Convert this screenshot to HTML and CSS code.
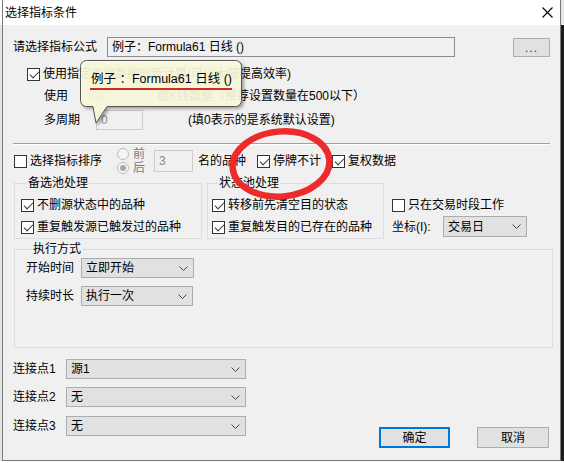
FILE: index.html
```html
<!DOCTYPE html>
<html lang="zh-CN">
  <head>
    <meta charset="UTF-8" />
    <title>选择指标条件</title>
    <link rel="stylesheet" href="styles.css">
  </head>
  <body>
    <div class="screen">
      <div class="left-edge"></div>
      <div class="dialog">
        <div class="titlebar">
          <span class="title">选择指标条件</span>
          <svg class="close" width="11" height="11" viewBox="0 0 11 11">
            <path d="M0.5 0.5 L10.5 10.5 M10.5 0.5 L0.5 10.5" stroke="#000" stroke-width="1.1" fill="none" />
          </svg>
        </div>

        <div class="content">
          <div class="row formula-row">
            <span class="lbl formula-lbl">请选择指标公式</span>
            <div class="field formula">例子：Formula61 日线 ()</div>
            <button class="btn dots">...</button>
          </div>

          <div class="row period-check">
            <span class="cb on"></span>
            <span class="cb-text">使用指定周期数据刷新计算(可以大幅提高效率)</span>
          </div>

          <div class="row count-row">
            <span class="lbl">使用</span>
            <div class="field disabled count">860</div>
            <span class="note">根K线数据（推荐设置数量在500以下）</span>
          </div>

          <div class="row multi-row">
            <span class="lbl">多周期</span>
            <div class="field disabled multi">0</div>
            <span class="note">(填0表示的是系统默认设置)</span>
          </div>

          <div class="separator"></div>

          <div class="row sort-row">
            <span class="cb"></span>
            <span class="cb-text">选择指标排序</span>
            <div class="radios">
              <div class="radio-item"><span class="radio"></span><span>前</span></div>
              <div class="radio-item"><span class="radio on"></span><span>后</span></div>
            </div>
            <div class="field disabled top-n">3</div>
            <span class="rank-text">名的品种</span>
            <span class="cb on suspend-cb"></span>
            <span class="cb-text">停牌不计</span>
            <span class="cb on adjust-cb"></span>
            <span class="cb-text">复权数据</span>
          </div>

          <div class="groups">
            <fieldset class="group pool">
              <legend>备选池处理</legend>
              <div class="group-item"><span class="cb on"></span><span class="cb-text">不删源状态中的品种</span></div>
              <div class="group-item"><span class="cb on"></span><span class="cb-text">重复触发源已触发过的品种</span></div>
            </fieldset>
            <fieldset class="group state">
              <legend>状态池处理</legend>
              <div class="group-item"><span class="cb on"></span><span class="cb-text">转移前先清空目的状态</span></div>
              <div class="group-item"><span class="cb on"></span><span class="cb-text">重复触发目的已存在的品种</span></div>
            </fieldset>
            <div class="side">
              <div class="group-item"><span class="cb"></span><span class="cb-text">只在交易时段工作</span></div>
              <div class="row axis-row">
                <span class="lbl axis-lbl">坐标(I):</span>
                <div class="select axis">
                  <span>交易日</span>
                  <svg class="chev" width="9" height="5" viewBox="0 0 9 5"><path d="M0.5 0.5 L4.5 4.5 L8.5 0.5" stroke="#444" fill="none" /></svg>
                </div>
              </div>
            </div>
          </div>

          <fieldset class="group exec">
            <legend>执行方式</legend>
            <div class="row exec-row">
              <span class="lbl exec-lbl">开始时间</span>
              <div class="select start">
                <span>立即开始</span>
                <svg class="chev" width="9" height="5" viewBox="0 0 9 5"><path d="M0.5 0.5 L4.5 4.5 L8.5 0.5" stroke="#444" fill="none" /></svg>
              </div>
            </div>
            <div class="row exec-row second">
              <span class="lbl exec-lbl">持续时长</span>
              <div class="select duration">
                <span>执行一次</span>
                <svg class="chev" width="9" height="5" viewBox="0 0 9 5"><path d="M0.5 0.5 L4.5 4.5 L8.5 0.5" stroke="#444" fill="none" /></svg>
              </div>
            </div>
          </fieldset>

          <div class="bottom">
            <div class="links">
              <div class="row link-row">
                <span class="lbl link-lbl">连接点1</span>
                <div class="select link">
                  <span>源1</span>
                  <svg class="chev" width="9" height="5" viewBox="0 0 9 5"><path d="M0.5 0.5 L4.5 4.5 L8.5 0.5" stroke="#444" fill="none" /></svg>
                </div>
              </div>
              <div class="row link-row">
                <span class="lbl link-lbl">连接点2</span>
                <div class="select link">
                  <span>无</span>
                  <svg class="chev" width="9" height="5" viewBox="0 0 9 5"><path d="M0.5 0.5 L4.5 4.5 L8.5 0.5" stroke="#444" fill="none" /></svg>
                </div>
              </div>
              <div class="row link-row third">
                <span class="lbl link-lbl">连接点3</span>
                <div class="select link">
                  <span>无</span>
                  <svg class="chev" width="9" height="5" viewBox="0 0 9 5"><path d="M0.5 0.5 L4.5 4.5 L8.5 0.5" stroke="#444" fill="none" /></svg>
                </div>
              </div>
            </div>
            <div class="actions">
              <button class="btn primary">确定</button>
              <button class="btn cancel">取消</button>
            </div>
          </div>
        </div>
      </div>
      <div class="right-edge"></div>

      <!-- tooltip over the formula field -->
      <div class="tip">
        <svg class="tip-shape" width="170" height="70" viewBox="0 0 170 70">
          <path d="M6.5 0.5 H155.5 A6 6 0 0 1 161.5 6.5 V40.5 A6 6 0 0 1 155.5 46.5 H27 L16 63 L13 46.5 H6.5 A6 6 0 0 1 0.5 40.5 V6.5 A6 6 0 0 1 6.5 0.5 Z" />
        </svg>
        <span class="tip-text">例子 ：Formula61 日线 ()</span>
        <div class="tip-line"></div>
      </div>

      <!-- red marker circle -->
      <svg class="marker" width="112" height="80" viewBox="0 0 112 80">
        <ellipse cx="56" cy="39" rx="48.5" ry="32.5" transform="rotate(-5 56 39)" />
      </svg>
    </div>
    <div class="below"></div>
  </body>
</html>
```

FILE: styles.css
```css
* {
  box-sizing: border-box;
}
html, body {
  margin: 0;
  padding: 0;
}
body {
  width: 564px;
  height: 463px;
  overflow: hidden;
  background: #fff;
  font-family: "Liberation Sans", "Noto Sans CJK SC", sans-serif;
  font-size: 12px;
  line-height: 14px;
  color: #000;
}
.screen {
  display: flex;
  height: 461px;
  position: relative;
}
.left-edge {
  width: 2px;
  background: linear-gradient(#fff 0 25px, #e4e4e4 25px);
}
.right-edge {
  width: 3px;
  background: linear-gradient(#e8e8e8 0 25px, #1c1c1c 25px);
}
.below {
  height: 2px;
  background: #fff;
}
.dialog {
  width: 559px;
  display: flex;
  flex-direction: column;
  border: 1px solid #7a7a7a;
  border-top: none;
  background: #f0f0f0;
}
.titlebar {
  height: 25px;
  background: #fff;
  display: flex;
  align-items: center;
  padding-left: 2px;
  padding-right: 7px;
}
.title {
  flex: 1;
  font-size: 12px;
}
.close {
  display: block;
}
.content {
  padding-left: 10px;
  flex: 1;
}
.row {
  display: flex;
  align-items: center;
}
.lbl {
  white-space: nowrap;
}
.field {
  height: 20px;
  border: 1px solid #8c8c8c;
  background: #f0f0f0;
  display: flex;
  align-items: center;
  padding-left: 4px;
  white-space: nowrap;
}
.field.disabled {
  border-color: #cccccc;
  color: #8a8a8a;
}
.formula-row {
  margin-top: 12px;
  height: 20px;
}
.formula-lbl {
  width: 94px;
}
.formula {
  width: 348px;
}
.btn {
  font-family: "Liberation Sans", "Noto Sans CJK SC", sans-serif;
  font-size: 12px;
  line-height: 14px;
  background: #e1e1e1;
  border: 1px solid #adadad;
  padding: 0;
  color: #000;
}
.dots {
  margin-left: 58px;
  width: 37px;
  height: 19px;
  align-self: flex-start;
  margin-top: 1px;
  color: #3a1a8a;
  letter-spacing: 1px;
}
.cb {
  width: 13px;
  height: 13px;
  border: 1px solid #333;
  background: #fff;
  position: relative;
  flex: none;
}
.cb.on::after {
  content: "";
  position: absolute;
  left: 3.5px;
  top: 0.5px;
  width: 4px;
  height: 8px;
  border: solid #333;
  border-width: 0 1.3px 1.3px 0;
  transform: rotate(45deg);
}
.cb-text {
  margin-left: 3px;
  white-space: nowrap;
}
.period-check {
  margin-top: 10px;
  height: 14px;
  padding-left: 14px;
}
.count-row {
  margin-top: 5px;
  height: 20px;
  padding-left: 31px;
}
.count {
  margin-left: 15px;
  width: 68px;
}
.count-row .note {
  margin-left: 6px;
}
.multi-row {
  margin-top: 4px;
  height: 20px;
  padding-left: 31px;
}
.multi {
  margin-left: 16px;
  width: 47px;
  color: #7a7fa0;
}
.multi-row .note {
  margin-left: 45px;
}
.separator {
  margin-top: 13px;
  width: 537px;
  height: 2px;
  border-top: 1px solid #a0a0a0;
  border-bottom: 1px solid #fff;
}
.sort-row {
  margin-top: 2px;
  height: 28px;
  padding-left: 1px;
}
.radios {
  margin-left: 15px;
  display: flex;
  flex-direction: column;
  gap: 1px;
  color: #7a7a7a;
}
.radio-item {
  display: flex;
  align-items: center;
  gap: 4px;
  height: 13px;
  line-height: 13px;
}
.radio {
  width: 12px;
  height: 12px;
  border-radius: 50%;
  border: 1px solid #bcbcbc;
  background: #f4f4f4;
  display: flex;
  align-items: center;
  justify-content: center;
}
.radio.on::after {
  content: "";
  width: 6px;
  height: 6px;
  border-radius: 50%;
  background: #a8a8a8;
}
.top-n {
  margin-left: 9px;
  width: 39px;
  height: 22px;
  align-self: center;
  color: #6d6d6d;
}
.rank-text {
  margin-left: 5px;
}
.suspend-cb {
  margin-left: 11px;
}
.adjust-cb {
  margin-left: 11px;
}
.groups {
  display: flex;
  margin-top: 1px;
}
.group {
  margin: 0;
  padding: 0;
  border: 1px solid #dcdcdc;
  min-width: 0;
}
.group legend {
  padding: 0 1px;
  margin-left: 6px;
  line-height: 14px;
}
.pool {
  margin-left: 1px;
  width: 188px;
  height: 63px;
  padding: 8px 0 0 6px;
}
.state {
  margin-left: 5px;
  width: 177px;
  height: 63px;
  padding: 8px 0 0 4px;
}
.group-item {
  display: flex;
  align-items: center;
  height: 14px;
}
.group-item + .group-item {
  margin-top: 8px;
}
.side {
  margin-left: 8px;
  padding-top: 22px;
}
.axis-row {
  margin-top: 4px;
  height: 21px;
}
.axis-lbl {
  width: 51px;
}
.select {
  height: 20px;
  border: 1px solid #adadad;
  background: #e1e1e1;
  display: flex;
  align-items: center;
  justify-content: space-between;
  padding: 0 5px 0 4px;
  white-space: nowrap;
}
.chev {
  display: block;
}
.axis {
  width: 84px;
  height: 21px;
}
.exec {
  margin-top: 3px;
  margin-left: 1px;
  width: 539px;
  height: 106px;
  padding: 2px 0 0 11px;
}
.exec-row {
  height: 20px;
}
.exec-row.second {
  margin-top: 8px;
}
.exec-lbl {
  width: 55px;
}
.start {
  width: 113px;
}
.duration {
  width: 112px;
}
.bottom {
  margin-top: 11px;
  display: flex;
  align-items: flex-start;
}
.link-row {
  height: 20px;
}
.link-row + .link-row {
  margin-top: 8px;
}
.link-row.third {
  margin-top: 9px;
}
.link-lbl {
  width: 53px;
}
.link {
  width: 180px;
}
.actions {
  margin-left: 133px;
  margin-top: 68px;
  display: flex;
  gap: 27px;
}
.primary {
  width: 71px;
  height: 21px;
  border: 2px solid #0078d7;
}
.cancel {
  width: 72px;
  height: 21px;
}
.tip {
  position: absolute;
  left: 80px;
  top: 60px;
  width: 170px;
  height: 70px;
}
.tip-shape {
  position: absolute;
  left: 0;
  top: 0;
  filter: drop-shadow(2px 2px 1.5px rgba(0, 0, 0, 0.35));
}
.tip-shape path {
  fill: #ffffe1;
  fill-opacity: 0.9;
  stroke: #555;
  stroke-width: 1;
}
.tip-text {
  position: absolute;
  left: 11px;
  top: 11px;
  font-size: 12.5px;
  line-height: 16px;
  white-space: nowrap;
}
.tip-line {
  position: absolute;
  left: 10px;
  top: 28px;
  width: 142px;
  height: 2px;
  background: #d42a20;
}
.marker {
  position: absolute;
  left: 225px;
  top: 125px;
}
.marker ellipse {
  fill: none;
  stroke: #ee2b2b;
  stroke-width: 6.5;
}
```
